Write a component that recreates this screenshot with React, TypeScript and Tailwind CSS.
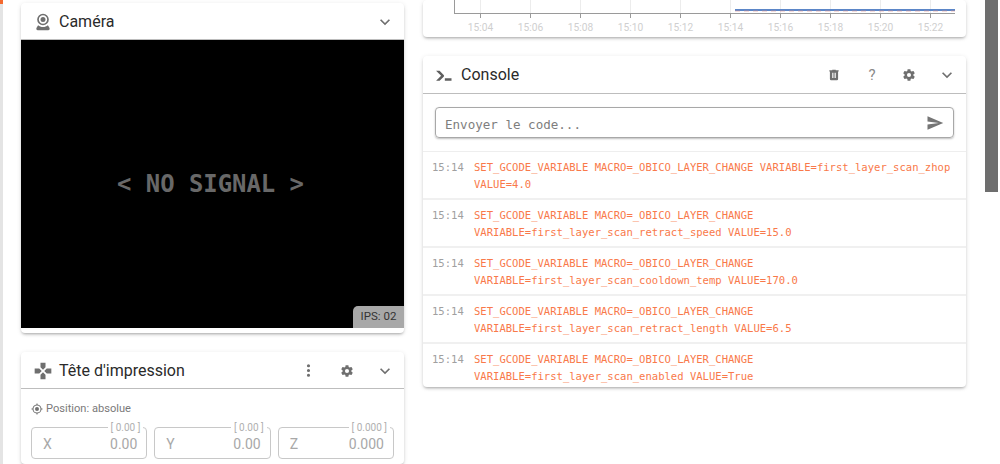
const mdi = {
  webcam: "M12,2A7,7 0 0,1 19,9A7,7 0 0,1 12,16A7,7 0 0,1 5,9A7,7 0 0,1 12,2M12,4A5,5 0 0,0 7,9A5,5 0 0,0 12,14A5,5 0 0,0 17,9A5,5 0 0,0 12,4M12,6A3,3 0 0,1 15,9A3,3 0 0,1 12,12A3,3 0 0,1 9,9A3,3 0 0,1 12,6M6,22A2,2 0 0,1 4,20C4,19.62 4.1,19.27 4.29,18.97L6.11,15.81C7.69,17.17 9.75,18 12,18C14.25,18 16.31,17.17 17.89,15.81L19.71,18.97C19.9,19.27 20,19.62 20,20A2,2 0 0,1 18,22H6Z",
  gamepad: "M16.5,9L13.5,12L16.5,15H22V9M9,16.5V22H15V16.5L12,13.5M7.5,9H2V15H7.5L10.5,12M15,7.5V2H9V7.5L12,10.5L15,7.5Z",
  console: "M13,19V16H21V19H13M8.5,13L2.47,7H6.71L11.67,11.95C12.25,12.53 12.25,13.47 11.67,14.05L6.74,19H2.5L8.5,13Z",
  chevron: "M7.41,8.58L12,13.17L16.59,8.58L18,10L12,16L6,10L7.41,8.58Z",
  dots: "M12,16A2,2 0 0,1 14,18A2,2 0 0,1 12,20A2,2 0 0,1 10,18A2,2 0 0,1 12,16M12,10A2,2 0 0,1 14,12A2,2 0 0,1 12,14A2,2 0 0,1 10,12A2,2 0 0,1 12,10M12,4A2,2 0 0,1 14,6A2,2 0 0,1 12,8A2,2 0 0,1 10,6A2,2 0 0,1 12,4Z",
  cog: "M12,15.5A3.5,3.5 0 0,1 8.5,12A3.5,3.5 0 0,1 12,8.5A3.5,3.5 0 0,1 15.5,12A3.5,3.5 0 0,1 12,15.5M19.43,12.97C19.47,12.65 19.5,12.33 19.5,12C19.5,11.67 19.47,11.34 19.43,11L21.54,9.37C21.73,9.22 21.78,8.95 21.66,8.73L19.66,5.27C19.54,5.05 19.27,4.96 19.05,5.05L16.56,6.05C16.04,5.66 15.5,5.32 14.87,5.07L14.5,2.42C14.46,2.18 14.25,2 14,2H10C9.75,2 9.54,2.18 9.5,2.42L9.13,5.07C8.5,5.32 7.96,5.66 7.44,6.05L4.95,5.05C4.73,4.96 4.46,5.05 4.34,5.27L2.34,8.73C2.21,8.95 2.27,9.22 2.46,9.37L4.57,11C4.53,11.34 4.5,11.67 4.5,12C4.5,12.33 4.53,12.65 4.57,12.97L2.46,14.63C2.27,14.78 2.21,15.05 2.34,15.27L4.34,18.73C4.46,18.95 4.73,19.03 4.95,18.95L7.44,17.94C7.96,18.34 8.5,18.68 9.13,18.93L9.5,21.58C9.54,21.82 9.75,22 10,22H14C14.25,22 14.46,21.82 14.5,21.58L14.87,18.93C15.5,18.67 16.04,18.34 16.56,17.94L19.05,18.95C19.27,19.03 19.54,18.95 19.66,18.73L21.66,15.27C21.78,15.05 21.73,14.78 21.54,14.63L19.43,12.97Z",
  trash: "M9,3V4H4V6H5V19A2,2 0 0,0 7,21H17A2,2 0 0,0 19,19V6H20V4H15V3H9M9,8H11V17H9V8M13,8H15V17H13V8Z",
  send: "M2,21L23,12L2,3V10L17,12L2,14V21Z",
  crosshairs: "M12,8A4,4 0 0,1 16,12A4,4 0 0,1 12,16A4,4 0 0,1 8,12A4,4 0 0,1 12,8M3.05,13H1V11H3.05C3.5,6.83 6.83,3.5 11,3.05V1H13V3.05C17.17,3.5 20.5,6.83 20.95,11H23V13H20.95C20.5,17.17 17.17,20.5 13,20.95V23H11V20.95C6.83,20.5 3.5,17.17 3.05,13M12,5A7,7 0 0,0 5,12A7,7 0 0,0 12,19A7,7 0 0,0 19,12A7,7 0 0,0 12,5Z",
};

function Icon({ d, className }: { d: string; className: string }) {
  return (
    <svg viewBox="0 0 24 24" className={className} fill="currentColor">
      <path d={d} />
    </svg>
  );
}

const cardClass = "bg-white rounded-[4px] shadow-[0_2px_3px_-1px_rgba(0,0,0,0.3),0_1px_5px_0_rgba(0,0,0,0.1)]";

function CardHeader({ icon, title, children }: { icon: string; title: string; children?: React.ReactNode }) {
  return (
    <div className="h-[37px] flex items-center pl-[12px] pr-[9px] pt-[1px] border-b border-[#bdbdbd] shrink-0">
      <Icon d={icon} className="w-[20px] h-[20px] mr-[6px] text-[#6f6f6f]" />
      <span className="text-[16px] text-[#2a2a2a] flex-1">{title}</span>
      {children}
      <Icon d={mdi.chevron} className="w-[20px] h-[20px] text-[#6f6f6f]" />
    </div>
  );
}

function AxisField({ name, limit, value }: { name: string; limit: string; value: string }) {
  return (
    <div className="relative flex-1 h-[32px] border border-[#c8c8c8] rounded-[4px] flex items-center justify-between pl-[11px] pr-[9px] pt-[2px] text-[14px] text-[#a8a8a8]">
      <span className="absolute -top-[6px] right-[3px] bg-white px-[3px] text-[10px] leading-[12px] text-[#b0b0b0]">{limit}</span>
      <span>{name}</span>
      <span>{value}</span>
    </div>
  );
}

const ticks = [
  { x: 57.5, label: "15:04" }, { x: 107.5, label: "15:06" }, { x: 157.5, label: "15:08" },
  { x: 207.5, label: "15:10" }, { x: 257.5, label: "15:12" }, { x: 307.5, label: "15:14" },
  { x: 357.5, label: "15:16" }, { x: 407.5, label: "15:18" }, { x: 457.5, label: "15:20" },
  { x: 507.5, label: "15:22" },
];

function Chart() {
  return (
    <svg width="543" height="37" className="block">
      {ticks.map((t) => (
        <g key={t.label}>
          <line x1={t.x} x2={t.x} y1="0" y2="13" stroke="#ececec" />
          <line x1={t.x} x2={t.x} y1="14" y2="18" stroke="#9a9a9a" />
          <text x={t.x} y="31" textAnchor="middle" fontSize="10.2" fill="#cfcfcf" fontFamily="Roboto, sans-serif">{t.label}</text>
        </g>
      ))}
      <line x1="31.5" x2="31.5" y1="0" y2="14" stroke="#9a9a9a" />
      <line x1="31" x2="532" y1="13.5" y2="13.5" stroke="#9a9a9a" />
      <line x1="312" x2="532" y1="10" y2="10" stroke="#5b86c8" strokeWidth="2" />
      <line x1="312" x2="532" y1="11" y2="11" stroke="#d98a8a" strokeDasharray="5 4" strokeWidth="0.6" />
    </svg>
  );
}

const logs = [
  ["SET_GCODE_VARIABLE MACRO=_OBICO_LAYER_CHANGE VARIABLE=first_layer_scan_zhop", "VALUE=4.0"],
  ["SET_GCODE_VARIABLE MACRO=_OBICO_LAYER_CHANGE", "VARIABLE=first_layer_scan_retract_speed VALUE=15.0"],
  ["SET_GCODE_VARIABLE MACRO=_OBICO_LAYER_CHANGE", "VARIABLE=first_layer_scan_cooldown_temp VALUE=170.0"],
  ["SET_GCODE_VARIABLE MACRO=_OBICO_LAYER_CHANGE", "VARIABLE=first_layer_scan_retract_length VALUE=6.5"],
  ["SET_GCODE_VARIABLE MACRO=_OBICO_LAYER_CHANGE", "VARIABLE=first_layer_scan_enabled VALUE=True"],
];

export default function App() {
  return (
    <div className="h-[464px] w-[1000px] overflow-hidden flex bg-white font-['Roboto',sans-serif]">
      <div className="w-[3px] bg-[#e4e4e4] shrink-0">
        <div className="h-[4px] bg-[#f4692f]" />
      </div>

      <div className="w-[383px] ml-[18px] mr-[19px] shrink-0 pt-[3px] flex flex-col gap-[19px]">
        <div className={cardClass + " overflow-hidden h-[330px] shrink-0"}>
          <CardHeader icon={mdi.webcam} title="Caméra" />
          <div className="relative h-[288px] pr-[4px] pt-[2px] bg-black flex items-center justify-center">
            <span className="font-['DejaVu_Sans_Mono',monospace] font-bold text-[23.9px] text-[#686868]">&lt; NO SIGNAL &gt;</span>
            <span className="absolute right-0 bottom-0 h-[22px] w-[51px] bg-[#a8a8a8] rounded-tl-[5px] flex items-center justify-center text-[11.5px] text-[#333]">IPS: 02</span>
          </div>
        </div>

        <div className={cardClass + " flex-1"}>
          <CardHeader icon={mdi.gamepad} title="Tête d'impression">
            <Icon d={mdi.dots} className="w-[19px] h-[19px] text-[#6f6f6f] mr-[22px]" />
            <Icon d={mdi.cog} className="w-[14px] h-[14px] text-[#6f6f6f] mr-[21px]" />
          </CardHeader>
          <div className="px-[10px] pt-[12px]">
            <div className="flex items-center gap-[3px] text-[11.1px] text-[#7a7a7a] h-[16px]">
              <Icon d={mdi.crosshairs} className="w-[12px] h-[12px] text-[#707070]" />
              <span>Position: absolue</span>
            </div>
            <div className="flex gap-[7px] mt-[10px]">
              <AxisField name="X" limit="[ 0.00 ]" value="0.00" />
              <AxisField name="Y" limit="[ 0.00 ]" value="0.00" />
              <AxisField name="Z" limit="[ 0.000 ]" value="0.000" />
            </div>
          </div>
        </div>
      </div>

      <div className="w-[543px] shrink-0 flex flex-col gap-[19px] self-start">
        <div className={cardClass + " h-[37px]"}>
          <Chart />
        </div>

        <div className={cardClass}>
          <div className="h-[38px] flex items-center pl-[11px] pr-[9px] pt-[1px] border-b border-[#bdbdbd]">
            <Icon d={mdi.console} className="w-[20px] h-[20px] mr-[7px] text-[#5f5f5f]" />
            <span className="text-[16px] text-[#2a2a2a] flex-1">Console</span>
            <Icon d={mdi.trash} className="w-[14px] h-[14px] text-[#6f6f6f] mr-[26px]" />
            <span className="text-[15px] text-[#8a8a8a] w-[10px] text-center mr-[25px]">?</span>
            <Icon d={mdi.cog} className="w-[14px] h-[14px] text-[#6f6f6f] mr-[21px]" />
            <Icon d={mdi.chevron} className="w-[20px] h-[20px] text-[#6f6f6f]" />
          </div>

          <div className="px-[12px] pt-[13px] pb-[13px] border-b border-[#eeeeee]">
            <div className="h-[31px] border border-[#a8a8a8] rounded-[4px] shadow-[0_1px_2px_rgba(0,0,0,0.25)] flex items-center justify-between pl-[9px] pr-[9px]">
              <span className="font-['DejaVu_Sans_Mono',monospace] pt-[5px] text-[12.55px] text-[#7e7e7e]">Envoyer le code...</span>
              <Icon d={mdi.send} className="w-[18px] h-[18px] text-[#757575]" />
            </div>
          </div>

          {logs.map((lines, i) => (
            <div key={i} className={"flex pl-[9px] pt-[7px] font-['DejaVu_Sans_Mono',monospace] text-[10.56px] leading-[17px] " + (i < logs.length - 1 ? "h-[48px] border-b-2 border-[#f0f0f0]" : "h-[43px]")}>
              <span className="text-[#a0a0a0] w-[42px] shrink-0">15:14</span>
              <div className="text-[#f9794a]">
                {lines.map((l) => (
                  <div key={l} className="whitespace-nowrap">{l}</div>
                ))}
              </div>
            </div>
          ))}
        </div>
      </div>

      <div className="ml-auto w-[15px] shrink-0">
        <div className="h-[192px] w-[13px] bg-[#6e6e6e]" />
      </div>
    </div>
  );
}
